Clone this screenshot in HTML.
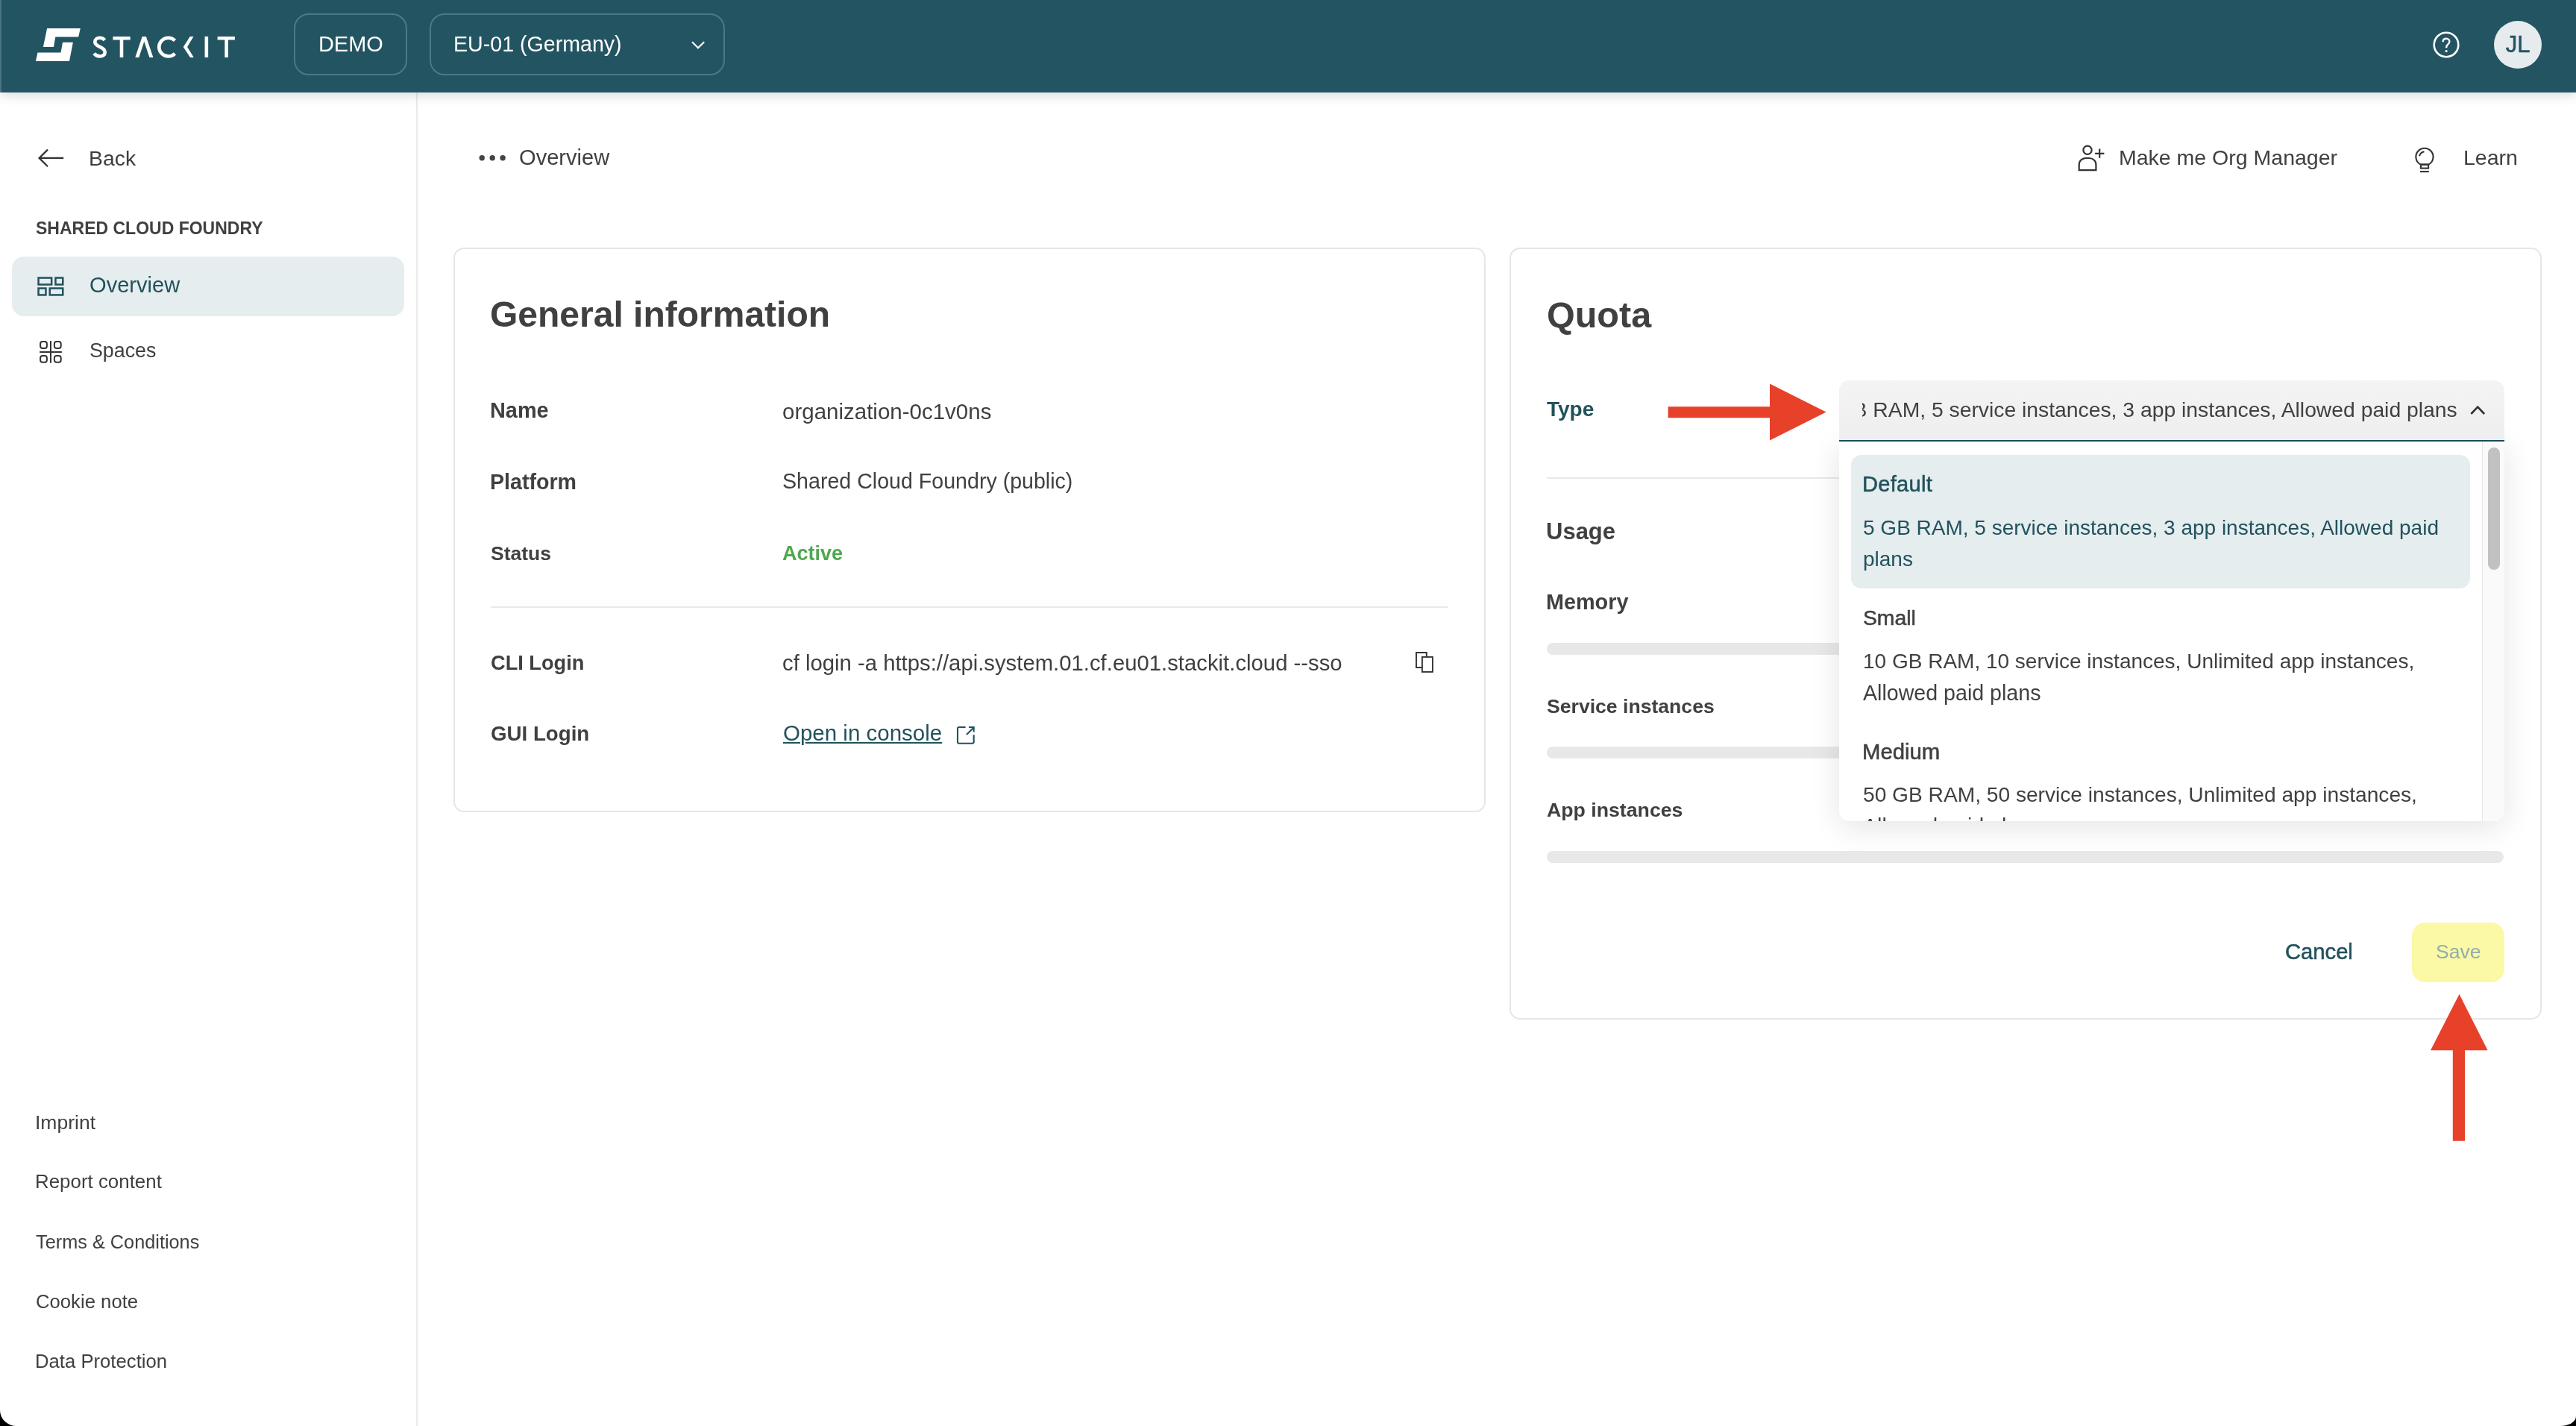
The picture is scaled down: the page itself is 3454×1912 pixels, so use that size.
<!DOCTYPE html>
<html><head><meta charset="utf-8">
<style>
*{box-sizing:border-box;margin:0;padding:0}
html,body{width:3454px;height:1912px;overflow:hidden;background:#000}
body{position:relative;font-family:"Liberation Sans",sans-serif;color:#404040;-webkit-font-smoothing:antialiased}
.a{position:absolute}
.t{position:absolute;white-space:nowrap;line-height:1;will-change:transform}
.hdr{left:0;top:0;width:3454px;height:124px;background:#235462;box-shadow:0 4px 15px rgba(0,0,0,0.15);z-index:5}
.strip{left:0;top:0;width:2px;height:124px;background:#4b7586}
.pill{border:2px solid #4d7886;border-radius:20px}
.side{left:558px;top:124px;width:2px;height:1788px;background:#ebebeb}
.card{border:2px solid #e6e6e6;border-radius:14px;background:#fff}
.lbl{font-weight:700;font-size:28px}
.med{-webkit-text-stroke:0.55px currentColor}
.val{font-size:28px}
.teal{color:#22525c}
.bar{height:16px;border-radius:8px;background:#e8e8e8}
</style></head><body>
<div class="a" style="left:0;top:0;width:3454px;height:1912px;background:#fff;border-radius:0 0 21px 22px / 0 0 13px 21px"></div>

<!-- HEADER -->
<div class="a hdr">
  <div class="a strip"></div>
  <svg class="a" style="left:0;top:0" width="340" height="124" viewBox="0 0 340 124">
    <polygon fill="#fff" points="63.1,38 107.8,38 105.2,49.6 74.3,49.6 72,62.9 57.9,62.9"/>
    <polygon fill="#fff" points="97.9,56.7 93,82 47.9,82 50.5,70.4 81.5,70.4 84,56.7"/>
    <g fill="none" stroke="#fff" stroke-width="4.6">
      <path d="M140.4,53.8 C138.7,51.6 136.3,50.8 133.6,50.8 C130,50.8 127.3,52.9 127.3,56.1 C127.3,60.2 131,61.6 134,62.9 C138,64.6 140.7,66.5 140.7,70.2 C140.7,73.6 137.8,75.5 133.6,75.5 C130.5,75.5 127.9,74.1 126.2,71.7"/>
      <path d="M151.4,51.25 H174.7 M163,51.25 V76.9"/>
      <path d="M234.5,54.4 A12.4,12.4 0 1 0 234.5,71.8"/>
      <path d="M276.85,48.9 V76.9"/>
      <path d="M291.6,51.25 H314.9 M303.65,51.25 V76.9"/>
    </g>
    <polygon fill="#fff" points="181.3,76.9 190.7,48.9 195.9,48.9 205.4,76.9 200.4,76.9 193.3,55.8 186.3,76.9"/>
    <polygon fill="#fff" points="254.7,48.9 259.5,48.9 251.1,62.9 259.8,76.9 255,76.9 245.8,62.9"/>
  </svg>
  <div class="a pill" style="left:394px;top:18px;width:152px;height:83px"></div>
  <div class="t" style="left:427px;top:45px;font-size:28.9px;color:#fff">DEMO</div>
  <div class="a pill" style="left:576px;top:18px;width:396px;height:83px"></div>
  <div class="t" style="left:608px;top:45px;font-size:28.6px;color:#fff">EU-01 (Germany)</div>
  <svg class="a" style="left:920px;top:50px" width="30" height="22" viewBox="0 0 30 22"><path d="M8,6.2 L16,14.2 L24.2,6.2" fill="none" stroke="#fff" stroke-width="2.2"/></svg>
  <!-- help -->
  <svg class="a" style="left:3256px;top:36px" width="48" height="48" viewBox="0 0 48 48">
    <circle cx="24" cy="24" r="16.3" fill="none" stroke="#fff" stroke-width="2.6"/>
    <path d="M19.6,20.3 C19.6,17.5 21.5,15.8 24,15.8 C26.6,15.8 28.4,17.6 28.4,19.8 C28.4,23.3 24.2,23.5 24.2,27.2 V28.3" fill="none" stroke="#fff" stroke-width="2.4"/>
    <circle cx="24.1" cy="32.6" r="1.6" fill="#fff"/>
  </svg>
  <div class="a" style="left:3344px;top:28px;width:64px;height:64px;border-radius:50%;background:#e6ebee"></div>
  <div class="t med" style="left:3356px;top:44px;font-size:31px;color:#235462;width:40px;text-align:center">JL</div>
</div>

<!-- SIDEBAR -->
<div class="a side"></div>
<svg class="a" style="left:40px;top:190px" width="60" height="45" viewBox="40 190 60 45">
  <path d="M64,200.6 L52.6,211.9 L64,223.2 M52.6,211.9 H85.2" fill="none" stroke="#333" stroke-width="2.3"/>
</svg>
<div class="t" style="left:119px;top:198px;font-size:28.4px">Back</div>
<div class="t" style="left:48px;top:295px;font-size:23px;font-weight:700;color:#404040">SHARED CLOUD FOUNDRY</div>
<div class="a" style="left:16px;top:344px;width:526px;height:80px;border-radius:16px;background:#e5edef"></div>
<svg class="a" style="left:44px;top:362px" width="50" height="40" viewBox="44 362 50 40">
  <g fill="none" stroke="#22525c" stroke-width="2.5">
    <rect x="51.55" y="372.55" width="17.6" height="9" />
    <rect x="74.45" y="372.55" width="9.8" height="9" />
    <rect x="51.55" y="386.55" width="9.9" height="8.9" />
    <rect x="66.75" y="386.55" width="17.5" height="8.9" />
  </g>
</svg>
<div class="t teal" style="left:120px;top:368px;font-size:29.1px">Overview</div>
<svg class="a" style="left:44px;top:448px" width="50" height="48" viewBox="44 448 50 48">
  <g fill="none" stroke="#333" stroke-width="2">
    <rect x="54.1" y="458.1" width="8.8" height="8.8" rx="3"/>
    <rect x="72.9" y="458.1" width="8.8" height="8.8" rx="3"/>
    <rect x="54.1" y="477" width="8.8" height="8.8" rx="3"/>
    <rect x="72.9" y="477" width="8.8" height="8.8" rx="3"/>
    <path d="M68,457 V486.7 M53.1,472 H82.9"/>
  </g>
</svg>
<div class="t" style="left:120px;top:457px;font-size:26.8px">Spaces</div>
<div class="t" style="left:47px;top:1492px;font-size:26.5px">Imprint</div>
<div class="t" style="left:47px;top:1572px;font-size:25.9px">Report content</div>
<div class="t" style="left:48px;top:1653px;font-size:25.3px">Terms &amp; Conditions</div>
<div class="t" style="left:48px;top:1733px;font-size:25.7px">Cookie note</div>
<div class="t" style="left:47px;top:1813px;font-size:25.7px">Data Protection</div>

<!-- BREADCRUMB -->
<svg class="a" style="left:636px;top:200px" width="50" height="24" viewBox="636 200 50 24">
  <g fill="#444"><circle cx="646.2" cy="211.8" r="3.7"/><circle cx="660.2" cy="211.8" r="3.7"/><circle cx="674.1" cy="211.8" r="3.7"/></g>
</svg>
<div class="t" style="left:696px;top:197px;font-size:29.1px">Overview</div>
<svg class="a" style="left:2780px;top:188px" width="50" height="48" viewBox="2780 188 50 48">
  <g fill="none" stroke="#333" stroke-width="2.2">
    <circle cx="2799" cy="201.2" r="5.6"/>
    <path d="M2787.7,228.1 V221 C2787.7,215.5 2791.5,212 2797,212 H2801 C2806.5,212 2810.4,215.5 2810.4,221 V228.1 Z"/>
    <path d="M2809.1,205.8 H2821.4 M2815.2,199.6 V211.7"/>
  </g>
</svg>
<div class="t" style="left:2841px;top:197px;font-size:28.5px">Make me Org Manager</div>
<svg class="a" style="left:3228px;top:190px" width="46" height="48" viewBox="3228 190 46 48">
  <g fill="none" stroke="#333" stroke-width="2.1">
    <path d="M3245.6,220.6 A11.6,11.6 0 1 1 3256.3,220.6 Z"/>
    <rect x="3245.9" y="220.6" width="10.2" height="5"/>
    <path d="M3245,230.1 H3256.8"/>
    <path d="M3243.9,209.2 C3244.9,206 3247.3,203.8 3250.5,203.2"/>
  </g>
</svg>
<div class="t" style="left:3303px;top:197px;font-size:28.5px">Learn</div>


<!-- CARD 1 -->
<div class="a card" style="left:608px;top:332px;width:1384px;height:757px"></div>
<div class="t" style="left:657px;top:398px;font-size:48px;font-weight:700">General information</div>
<div class="t lbl" style="left:657px;top:536px;font-size:28.9px">Name</div>
<div class="t val" style="left:1049px;top:537px;font-size:29.5px">organization-0c1v0ns</div>
<div class="t lbl" style="left:657px;top:632px;font-size:28.6px">Platform</div>
<div class="t val" style="left:1049px;top:631px;font-size:28.6px">Shared Cloud Foundry (public)</div>
<div class="t lbl" style="left:658px;top:729px;font-size:26.5px">Status</div>
<div class="t" style="left:1049px;top:729px;font-size:27px;font-weight:700;color:#4fa84f">Active</div>
<div class="a" style="left:658px;top:813px;width:1284px;height:2px;background:#e8e8e8"></div>
<div class="t lbl" style="left:658px;top:875px;font-size:27.2px">CLI Login</div>
<div class="t val" style="left:1049px;top:874px;font-size:29.3px">cf login -a https://api.system.01.cf.eu01.stackit.cloud --sso</div>
<svg class="a" style="left:1890px;top:866px" width="40" height="42" viewBox="1890 866 40 42">
  <g fill="none" stroke="#333" stroke-width="1.9">
    <path d="M1906.9,895 H1899 V875 H1912.8 V880.9"/>
    <rect x="1906.9" y="880.9" width="14" height="20"/>
  </g>
</svg>
<div class="t lbl" style="left:658px;top:970px;font-size:27.7px">GUI Login</div>
<div class="t teal" style="left:1050px;top:968px;font-size:29.5px;text-decoration:underline;text-decoration-thickness:2px;text-underline-offset:2px">Open in console</div>
<svg class="a" style="left:1276px;top:966px" width="40" height="40" viewBox="1276 966 40 40">
  <g fill="none" stroke="#22525c" stroke-width="2.1">
    <path d="M1294.6,975 H1286 Q1284,975 1284,977 V994.7 Q1284,996.7 1286,996.7 H1303.7 Q1305.7,996.7 1305.7,994.7 V985.3"/>
    <path d="M1296,985 L1305.6,975.6 M1299,975 H1305.7 V981.4"/>
  </g>
</svg>

<!-- CARD 2 -->
<div class="a card" style="left:2024px;top:332px;width:1384px;height:1035px"></div>
<div class="t" style="left:2074px;top:398px;font-size:48.5px;font-weight:700">Quota</div>
<div class="t lbl teal" style="left:2074px;top:535px">Type</div>
<div class="a" style="left:2074px;top:640px;width:1283px;height:2px;background:#e8e8e8"></div>
<div class="t" style="left:2073px;top:697px;font-size:31px;font-weight:700">Usage</div>
<div class="t lbl" style="left:2073px;top:793px;font-size:28.8px">Memory</div>
<div class="a bar" style="left:2074px;top:862px;width:1283px"></div>
<div class="t lbl" style="left:2074px;top:934px;font-size:26.6px">Service instances</div>
<div class="a bar" style="left:2074px;top:1001px;width:1283px"></div>
<div class="t lbl" style="left:2074px;top:1073px;font-size:26.7px">App instances</div>
<div class="a bar" style="left:2074px;top:1141px;width:1283px"></div>
<div class="t teal med" style="left:3064px;top:1262px;font-size:29.2px">Cancel</div>
<div class="a" style="left:3234px;top:1237px;width:124px;height:80px;border-radius:18px;background:#fbf8a6"></div>
<div class="t" style="left:3266px;top:1263px;font-size:26.5px;color:#8fafab">Save</div>

<!-- DROPDOWN -->
<div class="a" style="left:2466px;top:592px;width:892px;height:509px;border-radius:0 0 14px 14px;box-shadow:0 8px 40px rgba(0,0,0,0.11);z-index:2"></div>
<div class="a" style="left:2466px;top:510px;width:892px;height:82px;border-radius:14px 14px 0 0;background:linear-gradient(#f4f4f4,#eeeeee);border-bottom:2px solid #1d4b58;z-index:3;overflow:hidden">
  <div class="a" style="left:31px;top:0;width:800px;height:80px;overflow:hidden"><div class="t" style="right:2px;top:25px;font-size:28.3px;color:#404040">5 GB RAM, 5 service instances, 3 app instances, Allowed paid plans</div></div>
</div>
<svg class="a" style="left:3305px;top:536px;z-index:4" width="34" height="28" viewBox="3305 536 34 28">
  <path d="M3313.3,555 L3322.2,545.7 L3331.1,555" fill="none" stroke="#333" stroke-width="2.6"/>
</svg>
<div class="a" style="left:2466px;top:592px;width:892px;height:509px;border-radius:0 0 14px 14px;background:#fff;z-index:3;overflow:hidden">
  <div class="a" style="left:862px;top:0;width:30px;height:509px;border-left:1px solid #e6e6e6;background:#fafafa"></div>
  <div class="a" style="left:870px;top:8px;width:16px;height:164px;border-radius:8px;background:#c1c1c1"></div>
  <div class="a" style="left:16px;top:18px;width:830px;height:179px;border-radius:14px;background:#e5edef"></div>
  <div class="t teal med" style="left:31px;top:43px;font-size:29px;letter-spacing:0.3px">Default</div>
  <div class="t teal" style="left:32px;top:102px;font-size:28px">5 GB RAM, 5 service instances, 3 app instances, Allowed paid</div>
  <div class="t teal" style="left:32px;top:144px;font-size:28px">plans</div>
  <div class="t med" style="left:32px;top:222px;font-size:28.3px">Small</div>
  <div class="t" style="left:32px;top:281px;font-size:28px">10 GB RAM, 10 service instances, Unlimited app instances,</div>
  <div class="t" style="left:32px;top:323px;font-size:28.6px">Allowed paid plans</div>
  <div class="t med" style="left:31px;top:401px;font-size:29.3px">Medium</div>
  <div class="t" style="left:32px;top:460px;font-size:28.15px">50 GB RAM, 50 service instances, Unlimited app instances,</div>
  <div class="t" style="left:32px;top:502px;font-size:28.6px">Allowed paid plans</div>
</div>

<!-- RED ARROWS -->
<svg class="a" style="left:2200px;top:500px;z-index:6" width="260" height="100" viewBox="2200 500 260 100">
  <path d="M2236.6,545.2 H2373 V514.6 L2448.6,552.4 L2373,590.4 V560.3 H2236.6 Z" fill="#e8412a"/>
</svg>
<svg class="a" style="left:3250px;top:1320px;z-index:6" width="100" height="220" viewBox="3250 1320 100 220">
  <path d="M3297.5,1333 L3335.6,1408.2 H3305 V1529.8 H3288.8 V1408.2 H3259 Z" fill="#e8412a"/>
</svg>

</body></html>
